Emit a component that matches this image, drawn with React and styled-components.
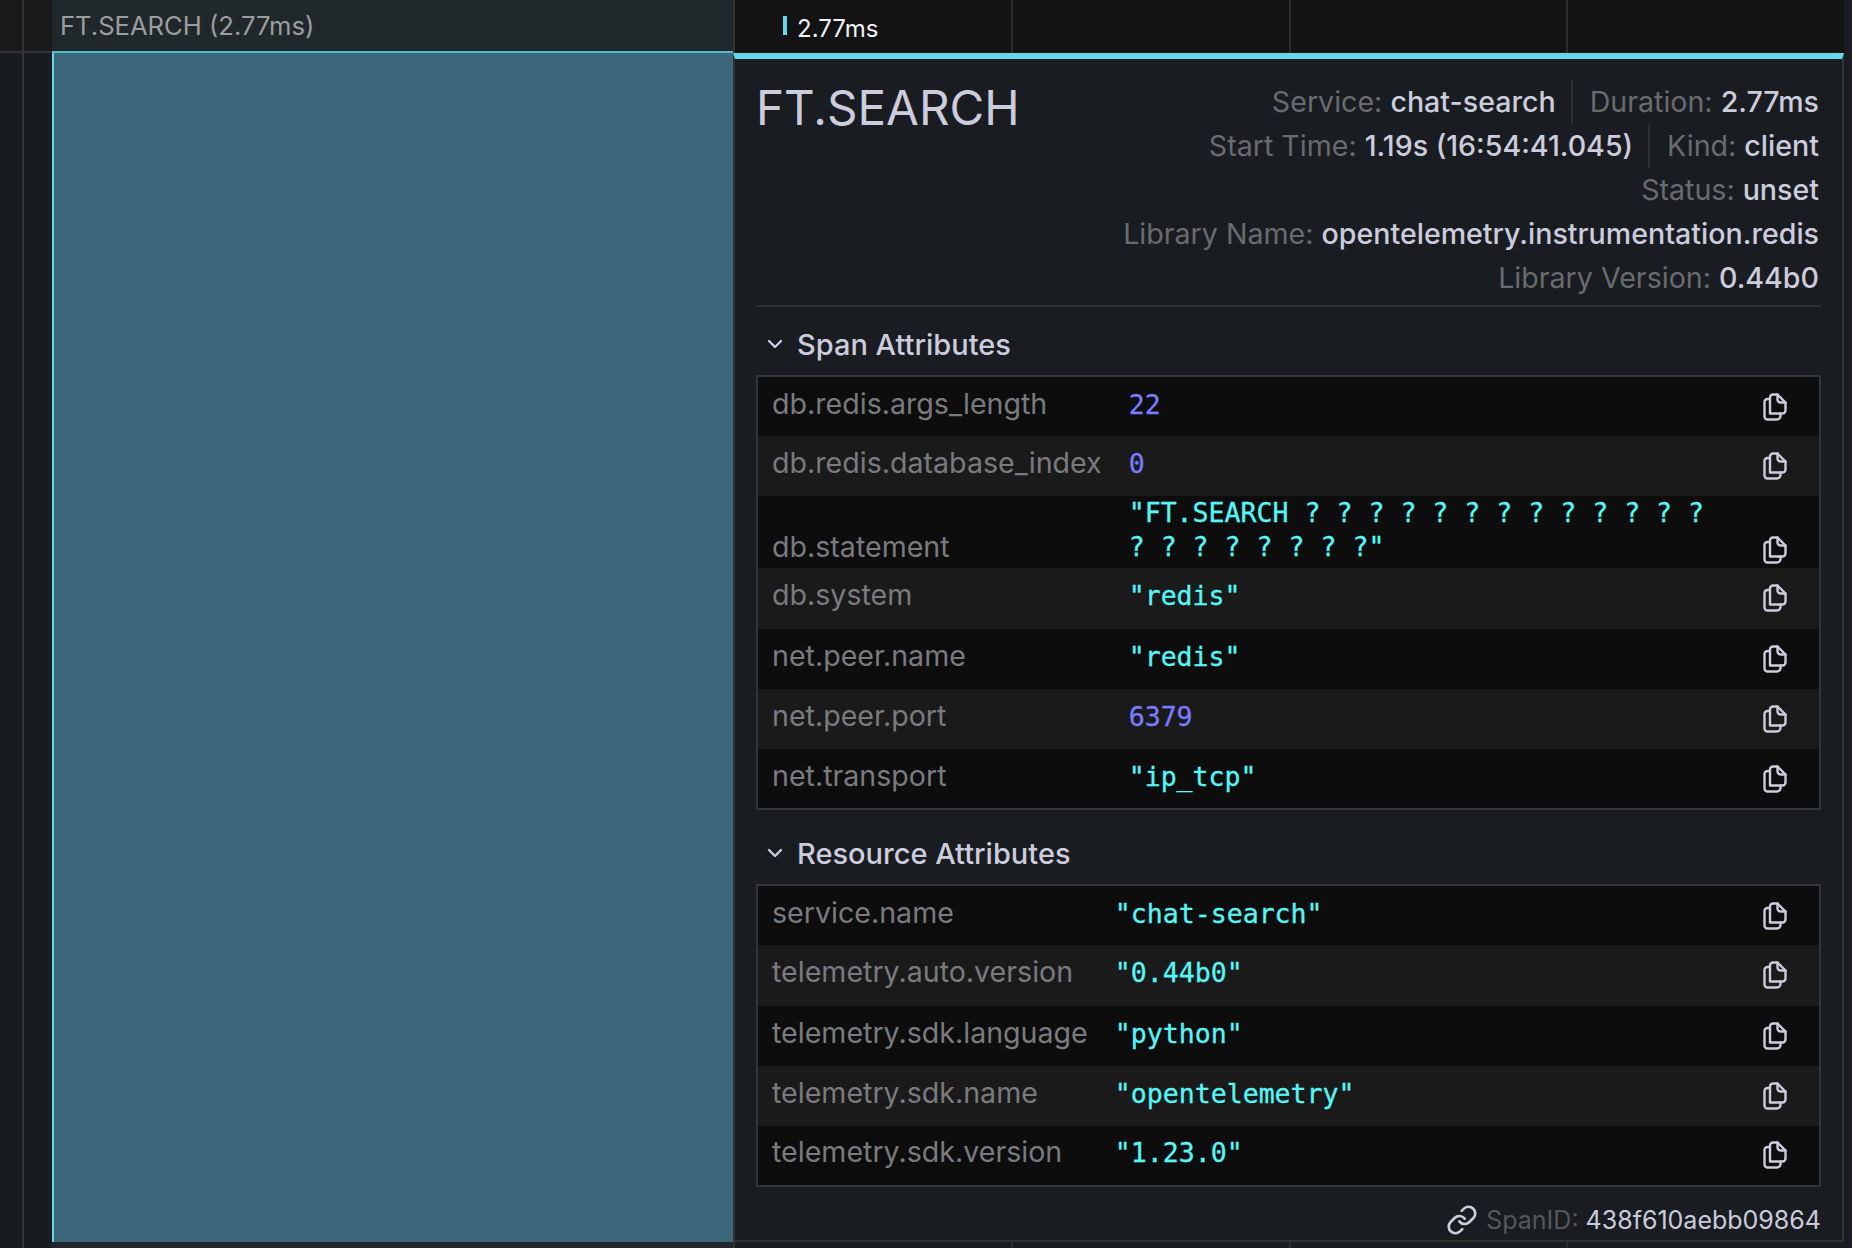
import React from 'react'
import styled, { createGlobalStyle } from 'styled-components'
import { ChevronDown, Link } from 'lucide-react'

const Global = createGlobalStyle`
  html, body { margin: 0; padding: 0; background: #191d22; }
  body { font-family: Inter, "Liberation Sans", sans-serif; }
`

const Page = styled.div`
  width: 1852px;
  height: 1248px;
  overflow: hidden;
  display: grid;
  grid-template-columns: 733px 1111px 8px;
  grid-template-rows: 53px 1189px 6px;
  background: #191d22;
`

const LeftHeader = styled.div`
  display: flex;
  background: #1a1a1a;
`
const Gutter = styled.div`
  width: 52px;
  flex: none;
  box-sizing: border-box;
  background: ${p => p.$bg || '#181c20'};
  border-bottom: ${p => (p.$line ? '2px solid #333' : 'none')};
  display: flex;
`
const GutterLine = styled.div`
  width: 2px;
  margin-left: 22px;
  background: #333;
`
const SpanLabel = styled.div`
  flex: 1;
  box-sizing: border-box;
  background: #20282b;
  border-bottom: 2px solid #55bccb;
  padding-left: 8px;
  line-height: 52px;
  font-size: 25.6px;
  color: #9b9d9e;
`
const LeftBody = styled.div`
  display: flex;
  background: #181c20;
`
const SpanBar = styled.div`
  flex: 1;
  background: #3c6679;
  border-left: 2px solid #64d8ea;
`
const Ticks = styled.div`
  display: grid;
  grid-template-columns: repeat(4, 1fr);
  background: #131313;
`
const Tick = styled.div`
  box-sizing: border-box;
  border-left: ${p => (p.$first ? '2px solid #333' : '2px solid #2b2b2b')};
  display: flex;
  align-items: flex-start;
  padding-left: 48px;
  color: #f2f2f6;
  font-size: 24px;
`
const TickMark = styled.span`
  width: 4px;
  height: 19px;
  margin-top: 16px;
  margin-right: 10px;
  background: #64d8ea;
`
const TickText = styled.span`
  line-height: 58px;
`
const Panel = styled.div`
  box-sizing: border-box;
  background: #191d22;
  border-top: 6px solid #64d8ea;
  border-left: 2px solid #333;
  border-right: 2px solid #333;
  border-bottom: 2px solid #333;
  padding: 0 21px 0 21px;
`
const Overview = styled.div`
  display: flex;
  justify-content: space-between;
  height: 248px;
  box-sizing: border-box;
  border-bottom: 2px solid #2c2f33;
`
const Title = styled.h2`
  margin: 18px 0 0;
  font-size: 47.6px;
  line-height: 62px;
  font-weight: 400;
  color: #ccccdc;
`
const Meta = styled.div`
  display: flex;
  flex-direction: column;
  align-items: flex-end;
  margin-top: 21px;
  padding-right: 2px;
`
const MetaRow = styled.div`
  display: flex;
  height: 44px;
`
const MetaItem = styled.div`
  font-size: 28.6px;
  line-height: 44px;
  color: #6a6b6e;
  padding-left: 17px;
  margin-left: ${p => (p.$split ? '15px' : '0')};
  border-left: ${p => (p.$split ? '2px solid #2c2f33' : 'none')};
  white-space: nowrap;
`
const MetaValue = styled.span`
  color: #ccccdc;
  font-weight: 500;
`
const SectionHead = styled.div`
  box-sizing: border-box;
  display: flex;
  align-items: flex-end;
  gap: 10px;
  padding: 0 0 13px 7px;
  height: ${p => p.$h}px;
  color: #ccccdc;
  font-size: 29px;
  line-height: 34px;
  font-weight: 500;
`
const Chevron = styled(ChevronDown)`
  margin-bottom: 6px;
`
const Table = styled.table`
  width: 100%;
  border-collapse: collapse;
  border: 2px solid #33353a;
`
const Row = styled.tr`
  height: ${p => (p.$tall ? 72 : 60.2)}px;
  background: ${p => (p.$odd ? '#0d0d0e' : '#1a1a1b')};
`
const KeyCell = styled.td`
  padding: ${p => (p.$tall ? '0 13px 4px 14px' : '0 13px 6px 14px')};
  vertical-align: ${p => (p.$tall ? 'bottom' : 'middle')};
  white-space: nowrap;
  font-size: 28.6px;
  line-height: 34px;
  color: #7a7b7e;
`
const ValueCell = styled.td`
  padding: ${p => (p.$tall ? '0 14px 4px' : '0 14px 4px')};
  width: 100%;
  vertical-align: ${p => (p.$tall ? 'bottom' : 'middle')};
  font-family: "DejaVu Sans Mono", monospace;
  font-size: 26.55px;
  line-height: 34px;
  color: ${p => (p.$num ? '#7b7bff' : '#55f7f7')};
  -webkit-text-stroke: 0.3px currentColor;
`
const ValueText = styled.div`
  max-width: 600px;
`
const CopyCell = styled.td`
  padding: ${p => (p.$tall ? '0 32px 4px 0' : '0 32px 0 0')};
  vertical-align: ${p => (p.$tall ? 'bottom' : 'middle')};
  line-height: 0;
`
const Footer = styled.div`
  box-sizing: border-box;
  display: flex;
  justify-content: flex-end;
  align-items: center;
  gap: 8px;
  height: 56px;
  padding-top: 10px;
  font-size: 25px;
  color: #55575a;
`
const FooterValue = styled.span`
  color: #ccccdc;
`
const RightEdge = styled.div`
  background: #191d22;
`
const BottomLeft = styled.div`
  display: flex;
  background: #20282b;
`
const BottomTicks = styled(Ticks)`
  background: #191d22;
`

const CopyIcon = () => (
  <svg width="24" height="28" viewBox="0 0 24 28" fill="none" stroke="#ccccdc" strokeWidth="2.4" strokeLinejoin="round" strokeLinecap="round">
    <path d="M7 20.5V4.5A3 3 0 0 1 10 1.5H14.5L22.5 9.5V17.500A3 3 0 0 1 19.500 20.500H7Z" />
    <path d="M14.500 1.500V6.500A3 3 0 0 0 17.500 9.500H22.500" />
    <path d="M6.500 6H4.500A3 3 0 0 0 1.500 9V23.500A3 3 0 0 0 4.500 26.500H14A3.500 3.500 0 0 0 17.500 23V20.500" />
  </svg>
)

const spanAttrs = [
  ['db.redis.args_length', '22', true],
  ['db.redis.database_index', '0', true],
  ['db.statement', '"FT.SEARCH ? ? ? ? ? ? ? ? ? ? ? ? ? ? ? ? ? ? ? ? ?"', false, true],
  ['db.system', '"redis"'],
  ['net.peer.name', '"redis"'],
  ['net.peer.port', '6379', true],
  ['net.transport', '"ip_tcp"'],
]

const resourceAttrs = [
  ['service.name', '"chat-search"'],
  ['telemetry.auto.version', '"0.44b0"'],
  ['telemetry.sdk.language', '"python"'],
  ['telemetry.sdk.name', '"opentelemetry"'],
  ['telemetry.sdk.version', '"1.23.0"'],
]

const Attrs = ({ rows }) => (
  <Table>
    <tbody>
      {rows.map(([k, v, num, tall], i) => (
        <Row key={k} $odd={i % 2 === 0} $tall={tall}>
          <KeyCell $tall={tall}>{k}</KeyCell>
          <ValueCell $num={num} $tall={tall}><ValueText>{v}</ValueText></ValueCell>
          <CopyCell $tall={tall}><CopyIcon /></CopyCell>
        </Row>
      ))}
    </tbody>
  </Table>
)

export default function App() {
  return (
    <Page>
      <Global />
      <LeftHeader>
        <Gutter $bg="#1a1a1a" $line><GutterLine /></Gutter>
        <SpanLabel>FT.SEARCH (2.77ms)</SpanLabel>
      </LeftHeader>
      <Ticks>
        <Tick $first><TickMark /><TickText>2.77ms</TickText></Tick>
        <Tick />
        <Tick />
        <Tick />
      </Ticks>
      <RightEdge />

      <LeftBody>
        <Gutter><GutterLine /></Gutter>
        <SpanBar />
      </LeftBody>
      <Panel>
        <Overview>
          <Title>FT.SEARCH</Title>
          <Meta>
            <MetaRow>
              <MetaItem>Service: <MetaValue>chat-search</MetaValue></MetaItem>
              <MetaItem $split>Duration: <MetaValue>2.77ms</MetaValue></MetaItem>
            </MetaRow>
            <MetaRow>
              <MetaItem>Start Time: <MetaValue>1.19s (16:54:41.045)</MetaValue></MetaItem>
              <MetaItem $split>Kind: <MetaValue>client</MetaValue></MetaItem>
            </MetaRow>
            <MetaRow><MetaItem>Status: <MetaValue>unset</MetaValue></MetaItem></MetaRow>
            <MetaRow><MetaItem>Library Name: <MetaValue>opentelemetry.instrumentation.redis</MetaValue></MetaItem></MetaRow>
            <MetaRow><MetaItem>Library Version: <MetaValue>0.44b0</MetaValue></MetaItem></MetaRow>
          </Meta>
        </Overview>
        <SectionHead $h={68}><Chevron size={24} strokeWidth={2.4} />Span Attributes</SectionHead>
        <Attrs rows={spanAttrs} />
        <SectionHead $h={74}><Chevron size={24} strokeWidth={2.4} />Resource Attributes</SectionHead>
        <Attrs rows={resourceAttrs} />
        <Footer>
          <Link size={32} color="#ccccdc" strokeWidth={2} />
          <span>SpanID: <FooterValue>438f610aebb09864</FooterValue></span>
        </Footer>
      </Panel>
      <RightEdge />

      <BottomLeft>
        <Gutter $bg="#181c20"><GutterLine /></Gutter>
      </BottomLeft>
      <BottomTicks>
        <Tick $first />
        <Tick />
        <Tick />
        <Tick />
      </BottomTicks>
      <RightEdge />
    </Page>
  )
}
